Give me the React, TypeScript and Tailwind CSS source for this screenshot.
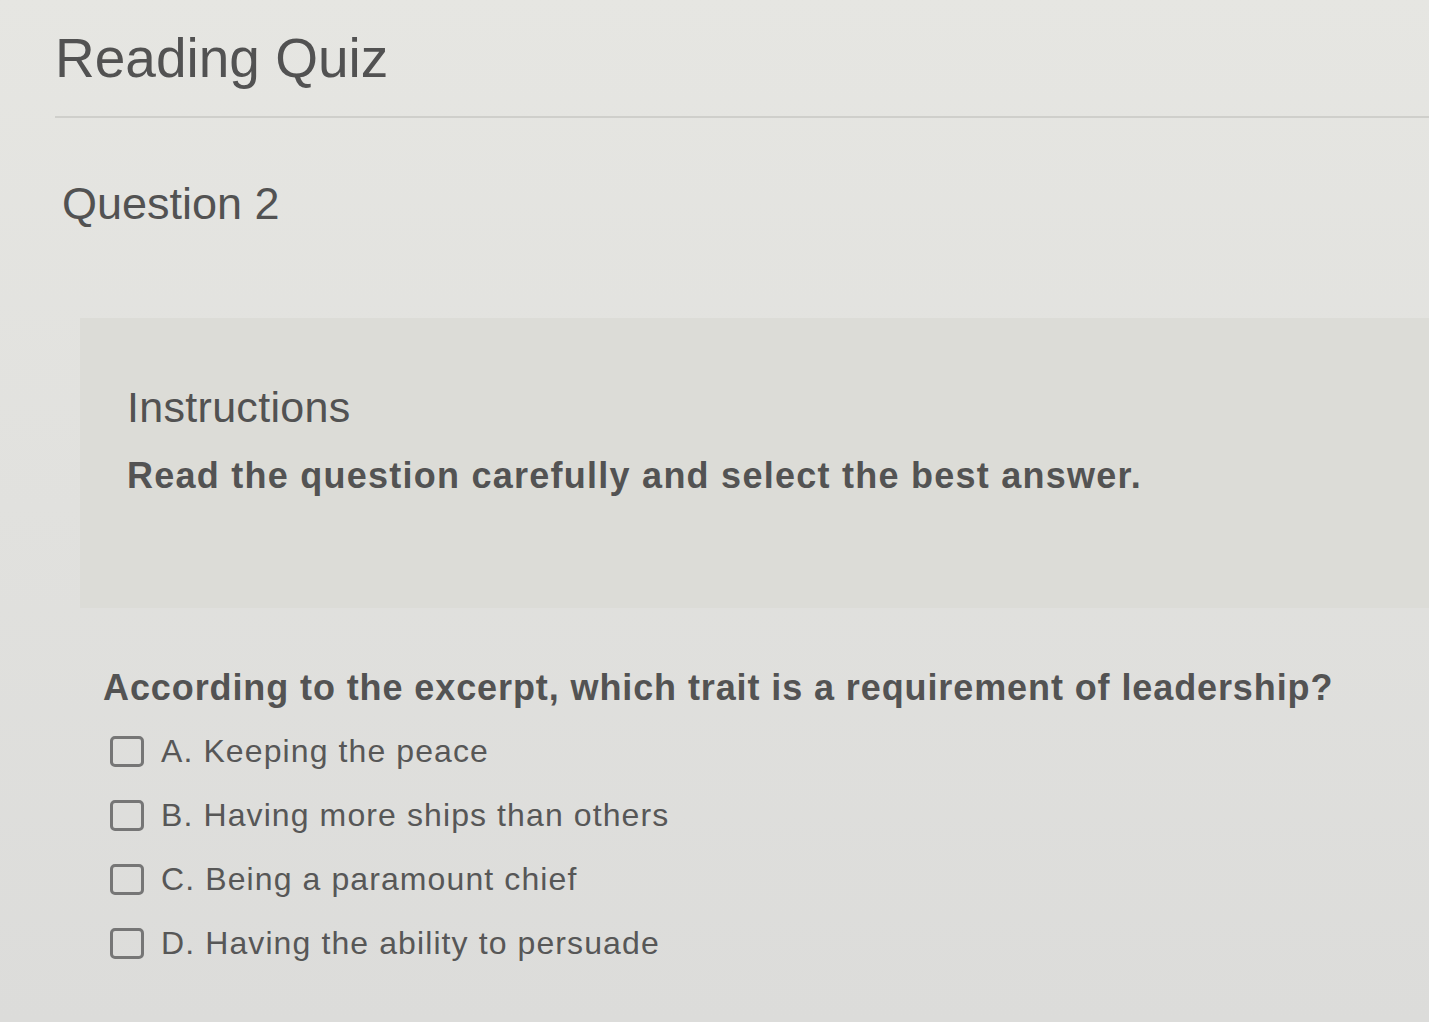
import { useState } from "react";

const OPTIONS = [
  "A. Keeping the peace",
  "B. Having more ships than others",
  "C. Being a paramount chief",
  "D. Having the ability to persuade",
];

export default function App() {
  const [picked, setPicked] = useState<number[]>([]);

  const toggle = (i: number) =>
    setPicked((p) => (p.includes(i) ? p.filter((x) => x !== i) : [...p, i]));

  return (
    <div
      className="min-h-screen bg-gradient-to-b from-[#e6e6e2] to-[#dcdcda] text-[#525252] overflow-hidden"
      style={{ fontFamily: "'Liberation Sans', Arial, sans-serif" }}
    >
      {/* Header */}
      <div className="pt-[26px] pl-[55px]">
        <h1 className="text-[55px] leading-[64px] font-normal">Reading Quiz</h1>
      </div>
      <div className="ml-[55px] mt-[26px] border-t-2 border-[#cfcfcb]" />

      {/* Question title */}
      <div className="pl-[62px] mt-[62px]">
        <h2 className="text-[45px] leading-[48px]">Question 2</h2>
      </div>

      {/* Instructions panel */}
      <div className="ml-[80px] mt-[90px] h-[290px] bg-[#dcdcd7] pl-[47px] pt-[66px]">
        <h3 className="text-[43px] leading-[46px] tracking-[0.3px]">Instructions</h3>
        <p className="mt-[24px] text-[36px] leading-[44px] font-bold text-[#535353] tracking-[1.25px]">
          Read the question carefully and select the best answer.
        </p>
      </div>

      {/* Question */}
      <div className="pl-[103px] pt-[58px]">
        <p className="text-[36px] leading-[44px] font-bold text-[#535353] tracking-[0.9px]">
          According to the excerpt, which trait is a requirement of leadership?
        </p>

        <ul className="mt-[20px] flex flex-col gap-[21px]">
          {OPTIONS.map((o, i) => (
            <li key={o}>
              <label className="flex items-center gap-[17px] cursor-pointer pl-[7px]">
                <span
                  onClick={() => toggle(i)}
                  className={`w-[34px] h-[31px] rounded-[5px] border-[3px] border-[#767676] ${
                    picked.includes(i) ? "bg-[#767676]" : "bg-transparent"
                  }`}
                />
                <span className="text-[32px] leading-[43px] text-[#575757] tracking-[1.1px]">{o}</span>
              </label>
            </li>
          ))}
        </ul>
      </div>
    </div>
  );
}
